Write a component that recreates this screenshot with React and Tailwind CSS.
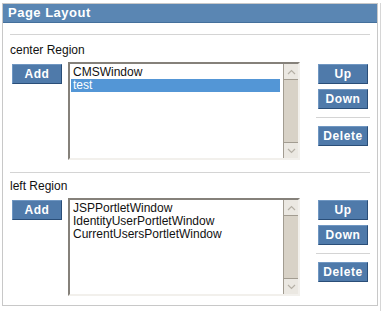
import React from 'react';

const font = { fontFamily: '"Liberation Sans", Arial, sans-serif' };

function BlueButton({ children, className = '' }) {
  return (
    <button
      className={`w-[50px] h-[20px] flex items-center justify-center bg-[#4f7aaa] text-white text-[12px] font-bold tracking-[0.6px] border border-t-[#7097c2] border-l-[#7097c2] border-b-[#2a4e78] border-r-[#2a4e78] ${className}`}
    >
      {children}
    </button>
  );
}

function Chevron({ up }) {
  return (
    <svg width="9" height="6" viewBox="0 0 9 6">
      <path
        d={up ? 'M1 5 L4.5 1.5 L8 5' : 'M1 1 L4.5 4.5 L8 1'}
        fill="none"
        stroke="#b5b0a6"
        strokeWidth="1.2"
      />
    </svg>
  );
}

function ListBox({ items, selected }) {
  return (
    <div className="ml-[6px] w-[232px] h-[98px] flex bg-white border-2 border-t-[#85817a] border-l-[#85817a] border-b-[#f2f0ec] border-r-[#f2f0ec]">
      <div className="flex-1 pt-[2px] pl-[1px] pr-[3px]">
        {items.map((it, i) => (
          <div
            key={it}
            className={`h-[13px] leading-[13px] pl-[2px] text-[12px] ${i === selected ? 'bg-[#5396d6] text-white' : 'text-[#111]'}`}
          >
            {it}
          </div>
        ))}
      </div>
      <div className="w-[15px] flex flex-col bg-[#d8d2c7] border-l border-[#a29c91]">
        <div className="h-[16px] flex items-center justify-center bg-[#ebe8e2] border-b border-[#a29c91]">
          <Chevron up />
        </div>
        <div className="flex-1" />
        <div className="h-[16px] flex items-center justify-center bg-[#ebe8e2] border-t border-[#a29c91]">
          <Chevron />
        </div>
      </div>
    </div>
  );
}

function Region({ label, items, selected, labelGap }) {
  return (
    <div>
      <div className="mx-[7px] h-px bg-[#d4d4d4]" />
      <div className={`pl-[7px] text-[12px] leading-[14px] text-[#111] ${labelGap}`}>{label}</div>
      <div className="mt-[5px] flex pl-[9px]">
        <BlueButton className="mt-[2px]">Add</BlueButton>
        <ListBox items={items} selected={selected} />
        <div className="ml-[18px] w-[50px] flex flex-col pt-[2px]">
          <BlueButton>Up</BlueButton>
          <BlueButton className="mt-[5px]">Down</BlueButton>
          <div className="-mx-[2px] mt-[8px] h-px bg-[#d4d4d4]" />
          <BlueButton className="mt-[8px]">Delete</BlueButton>
        </div>
      </div>
    </div>
  );
}

export default function App() {
  return (
    <div className="w-[382px] h-[311px] bg-white relative" style={font}>
      <div className="absolute right-[1px] top-0 bottom-0 w-px bg-[#d6d6d6]" />
      <div className="ml-[2px] mt-[3px] w-[376px] border border-[#c8c8c8] bg-white">
        <div className="h-[19px] bg-[#5a86b3] border-b border-[#44709c] flex items-center pl-[5px]">
          <span className="text-white text-[13px] font-bold tracking-[0.5px]">Page Layout</span>
        </div>
        <div className="pt-[11px] pb-[9px]">
          <Region
            label="center Region"
            items={['CMSWindow', 'test']}
            selected={1}
            labelGap="mt-[8px]"
          />
          <div className="h-[12px]" />
          <Region
            label="left Region"
            items={['JSPPortletWindow', 'IdentityUserPortletWindow', 'CurrentUsersPortletWindow']}
            selected={-1}
            labelGap="mt-[6px]"
          />
        </div>
      </div>
    </div>
  );
}
